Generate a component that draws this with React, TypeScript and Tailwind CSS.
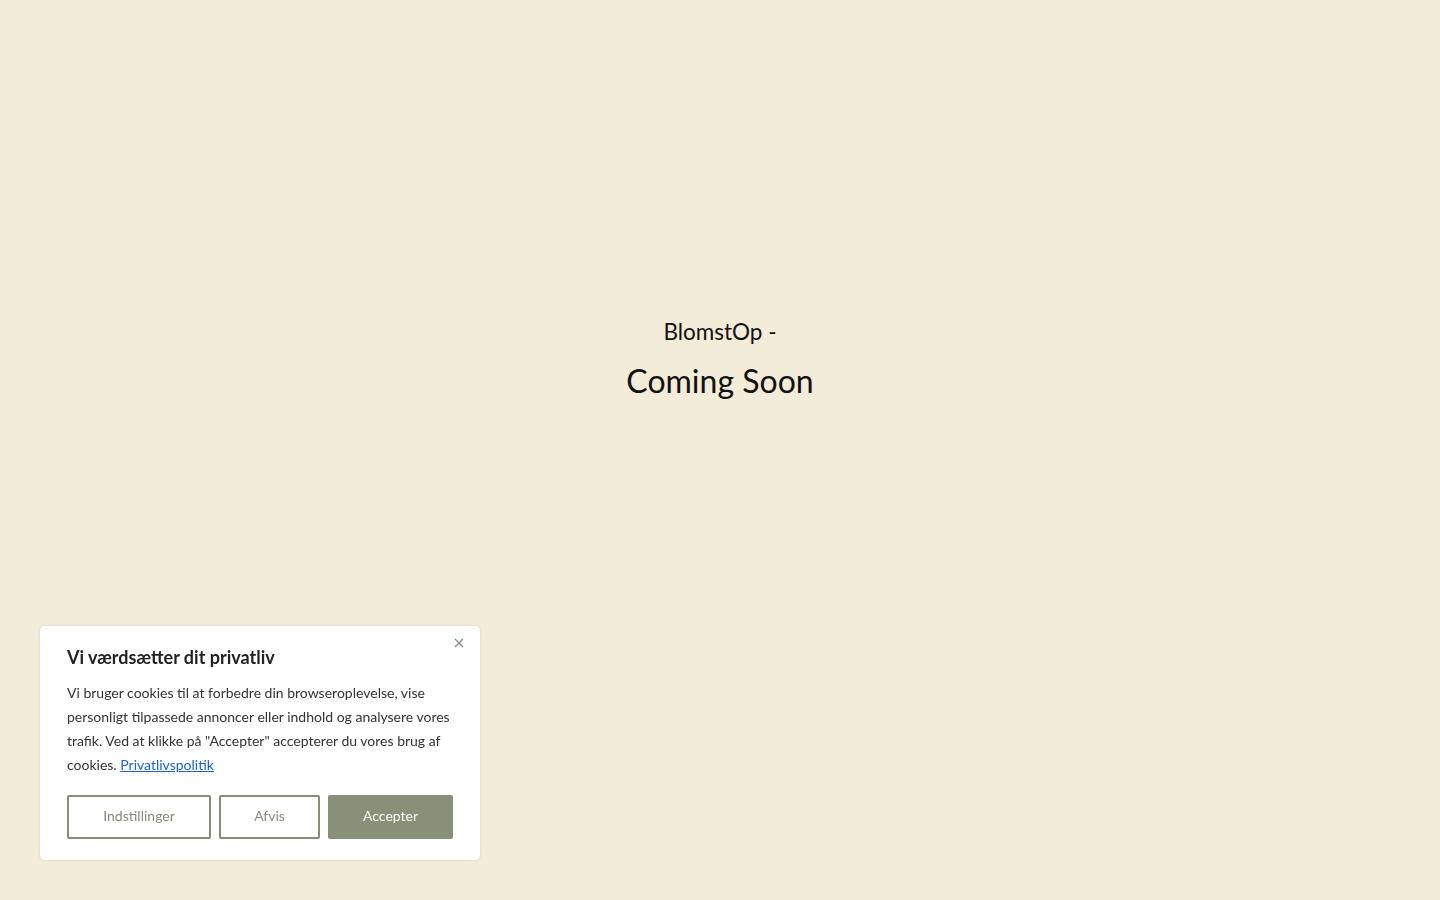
import React from "react";

const font = { fontFamily: '"Lato", "Open Sans", sans-serif' };

export default function App() {
  return (
    <div className="relative min-h-[900px] w-full bg-[#f3ecd9] text-[#121212]" style={font}>
      {/* Landing heading */}
      <main className="flex flex-col items-center pt-[315px]">
        <h2 className="text-[22.5px] leading-[33px]">BlomstOp -</h2>
        <h1 className="mt-[11px] text-[32px] leading-[44px]">Coming Soon</h1>
      </main>

      {/* Cookie consent banner */}
      <div className="fixed bottom-[40px] left-[40px] w-[440px] rounded-[5px] bg-white px-[27px] pb-[21px] pt-[20px] shadow-[0_0_3px_rgba(0,0,0,0.12)]">
        <button className="absolute right-[14px] top-[10px] flex h-[14px] w-[14px] items-center justify-center text-[#7d8794]">
          <svg width="10" height="10" viewBox="0 0 10 10" fill="none" stroke="currentColor" strokeWidth="1.2">
            <path d="M1 1l8 8M9 1l-8 8" />
          </svg>
        </button>
        <h3 className="text-[18px] font-bold leading-[22px] text-[#222]">Vi værdsætter dit privatliv</h3>
        <p className="mt-[13px] text-[14px] leading-[24px] text-[#333]">
          Vi bruger cookies til at forbedre din browseroplevelse, vise personligt tilpassede annoncer eller indhold og
          analysere vores trafik. Ved at klikke på "Accepter" accepterer du vores brug af cookies.{" "}
          <a className="text-[#1863dc] underline" href="#">
            Privatlivspolitik
          </a>
        </p>
        <div className="mt-[18px] flex gap-[8px]">
          <button className="h-[44px] w-[144px] rounded-[2px] border-2 border-[#878d78] pb-[4px] text-[14px] text-[#8b8b7d]">
            Indstillinger
          </button>
          <button className="h-[44px] w-[101px] rounded-[2px] border-2 border-[#878d78] pb-[4px] text-[14px] text-[#8b8b7d]">
            Afvis
          </button>
          <button className="h-[44px] w-[125px] rounded-[2px] bg-[#889178] pb-[4px] text-[14px] text-white">
            Accepter
          </button>
        </div>
      </div>
    </div>
  );
}
